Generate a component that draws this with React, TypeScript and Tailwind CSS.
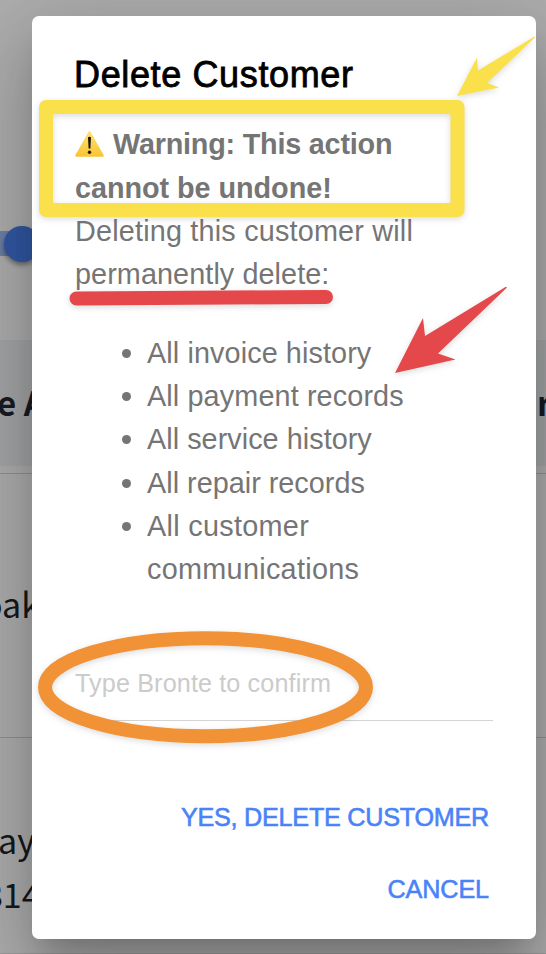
import { useState } from "react";
import type { ReactNode } from "react";

const DELETED_ITEMS = [
  { label: "All invoice history", tracking: "tracking-[0.1px]" },
  { label: "All payment records", tracking: "tracking-[0.12px]" },
  { label: "All service history", tracking: "tracking-[0.04px]" },
  { label: "All repair records", tracking: "tracking-[0.01px]" },
  { label: "All customer communications", tracking: "tracking-[0.3px]" },
];

function WarningIcon() {
  return (
    <svg className="inline-block w-[29px] h-[26px] mr-[9px] align-[-3px]" viewBox="0 0 29 26">
      <defs>
        <linearGradient id="warn" x1="0" y1="0" x2="0" y2="1">
          <stop offset="0" stopColor="#fde274" />
          <stop offset="1" stopColor="#f9c433" />
        </linearGradient>
      </defs>
      <path d="M13.4 1.1Q14.5-.5 15.6 1.1L28.6 24Q29.4 25.7 27.5 25.8H1.5Q-.4 25.7.4 24Z" fill="url(#warn)" />
      <path d="M13 6.2Q14.5 5.2 16 6.2L15.4 17.5H13.6Z" fill="#1c1608" />
      <circle cx="14.5" cy="21.3" r="1.7" fill="#1c1608" />
    </svg>
  );
}

function TableRow({ className, left, right }: { className: string; left?: ReactNode; right?: ReactNode }) {
  return (
    <div className={`flex justify-between overflow-hidden whitespace-nowrap ${className}`}>
      <div>{left}</div>
      <div>{right}</div>
    </div>
  );
}

function CustomerPage() {
  return (
    <div className="flex flex-col h-full bg-white text-[#212529] font-['Noto_Sans_CJK_JP','Noto_Sans',sans-serif]">
      {/* Toggle */}
      <div className="h-[340px] pt-[226px] shrink-0">
        <div className="flex items-center h-9">
          <div className="w-5 h-[25px] -mt-px bg-[#a1bdf8]" />
          <div className="w-9 h-9 -ml-4 rounded-full bg-[#4a80f0] shadow-[0_3px_5px_rgba(0,0,0,0.4)]" />
        </div>
      </div>

      {/* Table */}
      <TableRow
        className="h-[126px] shrink-0 bg-[#f0f3f5] pt-[37px] text-[33px] leading-[50px] font-bold text-[#1f2937]"
        left={<div className="-ml-[3px]">e A</div>}
        right={<div className="w-[9px]">r</div>}
      />
      <div className="h-2 border-b border-[#d5d5d5] shrink-0" />
      <TableRow
        className="h-[264px] shrink-0 border-b border-[#d5d5d5] pt-[105px] text-[34px] leading-[50px]"
        left={<div className="-ml-[18px]">oak</div>}
      />
      <TableRow
        className="h-[216px] shrink-0 border-b border-[#e5e5e5] pt-[75px] text-[34px] leading-[54px]"
        left={
          <>
            <div className="-ml-[2px]">ay</div>
            <div className="-ml-[16px]">814</div>
          </>
        }
      />
    </div>
  );
}

function Annotations() {
  return (
    <svg
      className="absolute inset-0 pointer-events-none [filter:drop-shadow(0_2px_3px_rgba(0,0,0,0.14))]"
      width="546"
      height="954"
      viewBox="0 0 546 954"
      fill="none"
    >
      <rect x="46" y="107" width="411.5" height="103" stroke="#fae14c" strokeWidth="14" strokeLinejoin="round" />
      <path d="M457 96L477 57.5L478 70.5L534 36.8Q536 36.4 535 37.6L487 83L499 87.5Z" fill="#fae14c" />
      <path d="M76.5 298.5L326 297" stroke="#e5484b" strokeWidth="14" strokeLinecap="round" />
      <path d="M395 373L423 318L425 336L505.5 287Q507.5 286.5 506.5 288L438 353.5L455.5 359.5Z" fill="#e5484b" />
      <ellipse cx="205.5" cy="687.2" rx="160.5" ry="49" stroke="#f09235" strokeWidth="14" />
    </svg>
  );
}

export default function App() {
  const [confirmText, setConfirmText] = useState("");

  return (
    <div className="relative w-[546px] h-[954px] overflow-hidden font-['Liberation_Sans',Arial,sans-serif]">
      <CustomerPage />

      {/* Backdrop */}
      <div className="absolute inset-0 bg-black/32 pl-8 pt-4">
        <div className="flex flex-col w-[504px] h-[923px] rounded-[7px] bg-white px-[43px] pt-[35px] shadow-[0_20px_27px_-13px_rgba(0,0,0,0.2),0_43px_68px_5px_rgba(0,0,0,0.14),0_16px_83px_14px_rgba(0,0,0,0.12)]">
          <h2 className="h-12 -ml-px text-[36px] leading-12 tracking-[0.63px] text-black whitespace-nowrap [-webkit-text-stroke:0.8px_black]">
            Delete Customer
          </h2>

          <div className="mt-[24.4px] text-[28.8px] leading-[43.2px] text-[#757575]">
            <p className="font-bold tracking-[-0.05px]">
              <span className="tracking-[-0.22px]">
                <WarningIcon />
                Warning: This action
              </span>
              <br />
              cannot be undone!
            </p>
            <p className="tracking-[0.19px]">
              Deleting this customer will
              <br />
              <span className="tracking-[0.08px]">permanently delete:</span>
            </p>
            <ul className="mt-[35.8px] pl-[72px]">
              {DELETED_ITEMS.map((item) => (
                <li key={item.label} className="flex">
                  <span className="w-[9px] h-[9px] mt-[17px] -ml-[25px] mr-4 rounded-full bg-[#757575] shrink-0" />
                  <span className={item.tracking}>{item.label}</span>
                </li>
              ))}
            </ul>
          </div>

          <input
            className="block mt-[72.2px] w-[418px] h-[58px] pb-[16px] border-b border-[#d4d4d4] text-[25.2px] tracking-[0.12px] text-[#757575] placeholder:text-[#cbcbcb] outline-none"
            placeholder="Type Bronte to confirm"
            value={confirmText}
            onChange={(e) => setConfirmText(e.target.value)}
          />

          <div className="flex flex-col items-end mt-[60px] pr-1 text-[25.2px] leading-[72px] text-[#4a83f8] whitespace-nowrap [-webkit-text-stroke:0.6px_#4a83f8]">
            <button className="tracking-[-0.25px]">YES, DELETE CUSTOMER</button>
            <button className="tracking-[-0.1px]">CANCEL</button>
          </div>
        </div>
      </div>

      <Annotations />
    </div>
  );
}
